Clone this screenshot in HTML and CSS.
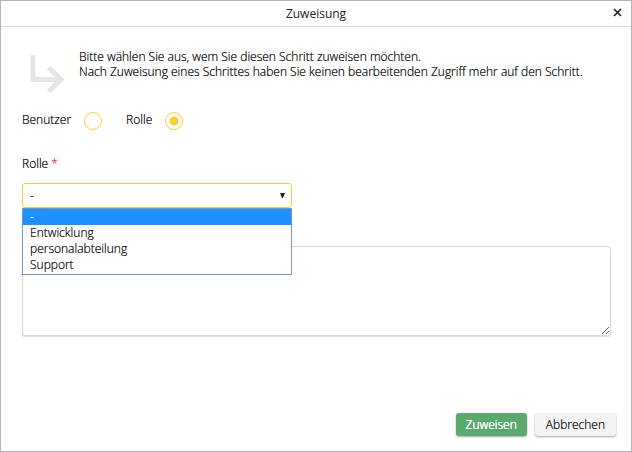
FILE: index.html
```html
<!DOCTYPE html>
<html lang="de">
<head>
<meta charset="utf-8">
<meta name="viewport" content="width=device-width, initial-scale=1">
<title>Zuweisung</title>
<link rel="stylesheet" href="styles.css">
</head>
<body>
<form class="dialog" role="dialog" aria-labelledby="dialog-title">
  <header class="dialog-header">
    <h1 class="dialog-title" id="dialog-title">Zuweisung</h1>
    <button class="close" type="button" aria-label="Schließen">
      <svg width="9" height="9" viewBox="0 0 9 9"><path d="M1 1l7 7M8 1l-7 7" fill="none" stroke="#222" stroke-width="1.700"/></svg>
    </button>
  </header>
  <main class="dialog-body">
    <div class="intro">
      <svg class="intro-icon" width="35" height="39" viewBox="0 0 35 39" aria-hidden="true"><path d="M3 0V24.500H30M18.500 12.500L31 24.500L18.500 36.500" fill="none" stroke="#e5e5e5" stroke-width="5"/></svg>
      <p class="intro-text">Bitte wählen Sie aus, wem Sie diesen Schritt zuweisen möchten.<br>Nach Zuweisung eines Schrittes haben Sie keinen bearbeitenden Zugriff mehr auf den Schritt.</p>
    </div>
    <div class="choices">
      <div class="choice">
        <label for="type-user">Benutzer</label>
        <input class="radio" type="radio" name="type" id="type-user">
      </div>
      <div class="choice">
        <label for="type-role">Rolle</label>
        <input class="radio" type="radio" name="type" id="type-role" checked>
      </div>
    </div>
    <label class="field-label" for="role">Rolle <span class="required">*</span></label>
    <div class="select-box">
      <select class="select" id="role">
        <option>-</option>
        <option>Entwicklung</option>
        <option>personalabteilung</option>
        <option>Support</option>
      </select>
      <svg class="select-arrow" width="5" height="5" viewBox="0 0 5 5" aria-hidden="true"><path d="M0 0H5L3 5H2Z" fill="#222"/></svg>
      <ul class="options" role="listbox" aria-label="Rolle">
        <li class="option option-active" role="option" aria-selected="true">-</li>
        <li class="option" role="option">Entwicklung</li>
        <li class="option" role="option">personalabteilung</li>
        <li class="option" role="option">Support</li>
      </ul>
    </div>
    <textarea class="comment" aria-label="Kommentar"></textarea>
  </main>
  <footer class="dialog-footer">
    <button class="button button-primary" type="submit">Zuweisen</button>
    <button class="button" type="button">Abbrechen</button>
  </footer>
</form>
</body>
</html>
```
FILE: styles.css
```css
* {
  box-sizing: border-box;
}

body {
  margin: 0;
  background: #fff;
  color: #222;
  font: 300 12px/15px "Open Sans", sans-serif;
  text-shadow: 0 0 0 currentColor;
}

button,
select,
textarea {
  font: inherit;
  color: inherit;
  text-shadow: inherit;
}

.dialog {
  display: flex;
  flex-direction: column;
  min-height: 100vh;
  border: 1px solid #b3b3b3;
}

.dialog-header {
  display: grid;
  grid-template-columns: 24px 1fr 24px;
  align-items: center;
  height: 26px;
  border-bottom: 1px solid #d9d9d9;
}

.dialog-title {
  grid-column: 2;
  margin: 0;
  font-size: 12px;
  font-weight: 400;
  text-align: center;
  text-shadow: none;
}

.close {
  display: flex;
  padding: 0 0 2px 6px;
  border: 0;
  background: none;
}

.dialog-body {
  flex: 1;
  padding: 22px 20px 0 21px;
}

.intro {
  display: flex;
  gap: 14px;
  padding-left: 8px;
}

.intro-icon {
  flex: none;
  margin-top: 6px;
}

.intro-text {
  margin: 0;
}

.choices {
  display: flex;
  gap: 24px;
  margin-top: 18px;
}

.choice {
  display: flex;
  gap: 13px;
}

.radio {
  appearance: none;
  width: 18px;
  height: 18px;
  margin: 0;
  border: 1px solid #fc3;
  border-radius: 50%;
  background: #fff;
}

.radio:checked {
  background: radial-gradient(circle, #fc3 4px, #fff 5px);
}

.field-label {
  display: block;
  margin-top: 26px;
}

.required {
  color: #ff4050;
}

.select-box {
  position: relative;
  width: 270px;
  margin-top: 12px;
}

.select {
  appearance: none;
  display: block;
  width: 100%;
  height: 25px;
  padding: 0 7px;
  border: 1px solid #fc3;
  border-radius: 3px;
  background: #fff;
}

.select-arrow {
  position: absolute;
  top: 10px;
  right: 7px;
}

.options {
  position: absolute;
  top: 100%;
  left: 0;
  right: 0;
  margin: 0;
  padding: 0 0 1px;
  border: 1px solid #7094d1;
  background: #fff;
  list-style: none;
}

.option {
  padding: 0 7px;
  line-height: 16px;
}

.option-active {
  background: #1e90ff;
  color: #fff;
}

.comment {
  display: block;
  width: 100%;
  height: 90px;
  margin-top: 38px;
  border: 1px solid #d9d9d9;
  border-radius: 3px;
  background: #fff;
  box-shadow: 0 1px 1px #ddd;
}

.dialog-footer {
  display: flex;
  justify-content: flex-end;
  gap: 8px;
  padding: 0 15px 15px;
}

.button {
  height: 23px;
  padding: 0 11px;
  border: 0;
  border-radius: 3px;
  background: #f4f4f4;
  box-shadow: 0 1px 2px rgba(0, 0, 0, 0.35);
}

.button-primary {
  padding: 0 10px;
  background: #5aaa6e;
  color: #fff;
  text-shadow: 0 0 0 #fff, 0 0 0 #fff;
}
```
